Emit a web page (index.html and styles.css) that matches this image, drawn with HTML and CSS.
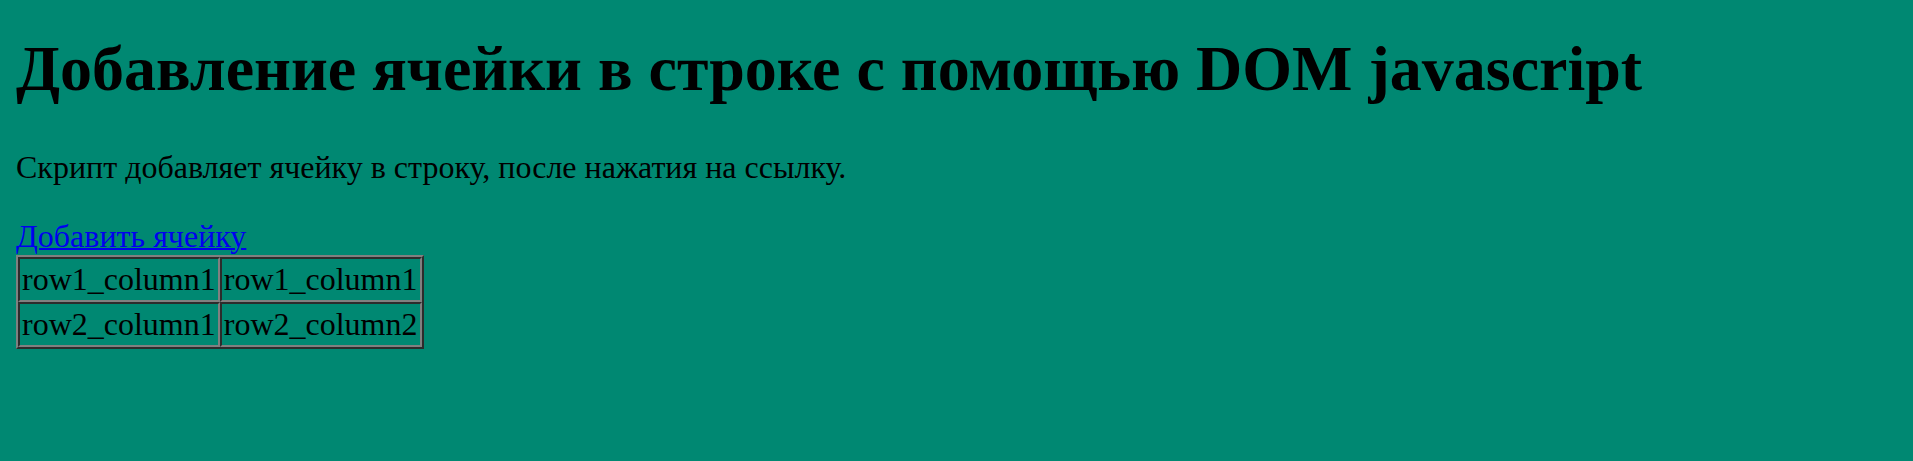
FILE: index.html
```html
<!DOCTYPE html>
<html lang="ru">
<head>
<meta charset="utf-8">
<title>Добавление ячейки в строке с помощью DOM javascript</title>
<link rel="stylesheet" href="styles.css">
</head>
<body class="page">
<h1 class="title">Добавление ячейки в строке с помощью DOM javascript</h1>
<p class="intro">Скрипт добавляет ячейку в строку, после нажатия на ссылку.</p>
<a class="add-link" href="#">Добавить ячейку</a>
<table class="grid">
  <tr><td class="cell">row1_column1</td><td class="cell">row1_column1</td></tr>
  <tr><td class="cell">row2_column1</td><td class="cell">row2_column2</td></tr>
</table>
</body>
</html>
```

FILE: styles.css
```css
html {
  background: #008872;
}
.page {
  margin: 16px;
  font-family: "Liberation Serif", "Times New Roman", serif;
  font-size: 32px;
  color: #000;
}
.title {
  font-size: 64px;
  font-weight: bold;
  margin: 16px 0 43px;
}
.intro {
  margin: 32px 0;
}
.add-link {
  color: #0000ee;
  text-decoration: underline;
  text-decoration-thickness: 2px;
}
.grid {
  border: 2px outset gray;
  border-spacing: 0;
  border-collapse: separate;
}
.cell {
  border: 2px inset gray;
  padding: 2px;
}
```
